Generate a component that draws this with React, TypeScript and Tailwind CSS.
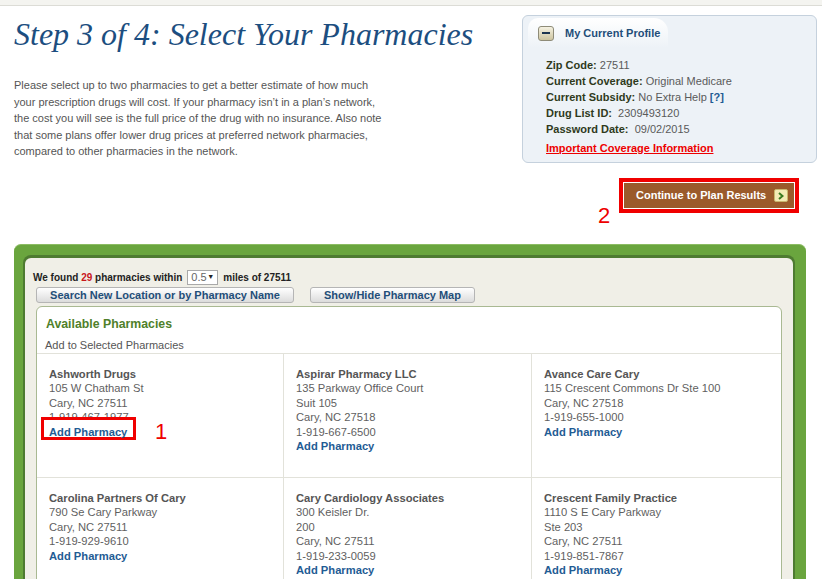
import React from 'react'

type Pharmacy = {
  name: string
  lines: string[]
}

const pharmacies: Pharmacy[] = [
  { name: 'Ashworth Drugs', lines: ['105 W Chatham St', 'Cary, NC 27511', '1-919-467-1977'] },
  { name: 'Aspirar Pharmacy LLC', lines: ['135 Parkway Office Court', 'Suit 105', 'Cary, NC 27518', '1-919-667-6500'] },
  { name: 'Avance Care Cary', lines: ['115 Crescent Commons Dr Ste 100', 'Cary, NC 27518', '1-919-655-1000'] },
  { name: 'Carolina Partners Of Cary', lines: ['790 Se Cary Parkway', 'Cary, NC 27511', '1-919-929-9610'] },
  { name: 'Cary Cardiology Associates', lines: ['300 Keisler Dr.', '200', 'Cary, NC 27511', '1-919-233-0059'] },
  { name: 'Crescent Family Practice', lines: ['1110 S E Cary Parkway', 'Ste 203', 'Cary, NC 27511', '1-919-851-7867'] },
]

function ProfileRow({ label, children }: { label: string; children: React.ReactNode }) {
  return (
    <div className="h-[16px] leading-[16px] whitespace-pre">
      <span className="font-bold text-[#2f3a1c]">{label}</span>
      <span className="text-[#5a5a5a]">{children}</span>
    </div>
  )
}

function PharmacyCell({ p, index }: { p: Pharmacy; index: number }) {
  const lastCol = index % 3 === 2
  return (
    <div
      className={`relative h-[124px] pl-3 pt-[13px] text-[11.2px] leading-[14.4px] ${index < 3 ? 'border-b border-[#e2e2da]' : ''} ${lastCol ? '' : 'border-r border-[#e2e2da]'}`}
    >
      <div className="font-bold text-[#555]">{p.name}</div>
      {p.lines.map((l) => (
        <div key={l} className="text-[#5f5f5f]">{l}</div>
      ))}
      <div className={`font-bold text-[#1f5c94] ${index === 0 ? 'relative z-10' : ''}`}>Add Pharmacy</div>

      {/* annotation 1 */}
      {index === 0 && (
        <>
          <div className="absolute left-[4px] top-[63px] w-[95px] h-[23px] bg-white border-[3px] border-[#f00000]" />
          <div className="absolute left-[118px] top-[67px] text-[22px] leading-[22px] text-[#ee0000]">1</div>
        </>
      )}
    </div>
  )
}

export default function App() {
  return (
    <div className="relative w-[822px] h-[579px] overflow-hidden bg-white font-['Liberation_Sans',Arial,sans-serif]">
      <div className="h-[6px] bg-[#f4f4f0] border-b border-[#dcdcd6]" />

      {/* HEADER */}
      <div className="flex items-start pt-[9px]">
        <div className="pl-[14px] flex-1">
          <h1 className="font-['Liberation_Serif','Times_New_Roman',serif] italic text-[32px] leading-[38px] text-[#1c4e80]">
            Step 3 of 4: Select Your Pharmacies
          </h1>
          <p className="mt-[24px] text-[11px] leading-[16.5px] text-[#555]">
            Please select up to two pharmacies to get a better estimate of how much
            <br />
            your prescription drugs will cost. If your pharmacy isn’t in a plan’s network,
            <br />
            the cost you will see is the full price of the drug with no insurance. Also note
            <br />
            that some plans offer lower drug prices at preferred network pharmacies,
            <br />
            compared to other pharmacies in the network.
          </p>
        </div>

        <div className="w-[295px] h-[148px] mr-[5px] rounded-[6px] border border-[#c5d1dd] bg-[#edf2f7]">
          <div className="ml-[5px] mt-[2px] w-[140px] h-[30px] rounded-tl-[10px] rounded-tr-[14px] bg-gradient-to-b from-white to-[#edf2f7] flex items-center pl-[10px] whitespace-nowrap">
            <div className="w-[16px] h-[15px] rounded-[3px] border border-[#8e8b78] bg-gradient-to-b from-[#f5f2e2] to-[#cdc4a0] flex items-center justify-center">
              <div className="w-[8px] h-[2px] bg-[#1d3550]" />
            </div>
            <span className="ml-[11px] text-[11px] font-bold text-[#1f4e79]">My Current Profile</span>
          </div>
          <div className="pl-[23px] pt-[9px] text-[11px]">
            <ProfileRow label="Zip Code:"> 27511</ProfileRow>
            <ProfileRow label="Current Coverage:"> Original Medicare</ProfileRow>
            <ProfileRow label="Current Subsidy:">
              {' No Extra Help '}
              <span className="font-bold text-[#1f5c94]">[?]</span>
            </ProfileRow>
            <ProfileRow label="Drug List ID:">{'  2309493120'}</ProfileRow>
            <ProfileRow label="Password Date:">{'  09/02/2015'}</ProfileRow>
            <div className="mt-[3px] h-[16px] leading-[16px] font-bold text-[#ee0000] underline">Important Coverage Information</div>
          </div>
        </div>
      </div>

      {/* CONTINUE BUTTON */}
      <div className="flex justify-end pr-[23px] mt-[15px]">
        <div className="relative border-4 border-[#f00000] p-[1px] bg-white">
          <div className="w-[170px] h-[25px] bg-[#9b5a2b] flex items-center pl-[12px] pr-[6px] whitespace-nowrap">
            <span className="text-[11px] font-bold text-white">Continue to Plan Results</span>
            <span className="ml-auto w-[14px] h-[13px] rounded-[2px] border border-[#c9b76e] bg-[#f3ebb6] flex items-center justify-center">
              <svg width="6" height="8" viewBox="0 0 6 8">
                <path d="M1 1 L4.5 4 L1 7" fill="none" stroke="#3b7a22" strokeWidth="2" />
              </svg>
            </span>
          </div>
          <div className="absolute left-[-25px] top-[23px] text-[22px] leading-[22px] text-[#ee0000]">2</div>
        </div>
      </div>

      {/* GREEN PANEL */}
      <div className="ml-[14px] mt-[31px] w-[792px] h-[400px] rounded-t-[7px] bg-[#6aa53e] border-t border-[#8cbc63] pt-[13px] pl-[11px] pr-[13px]">
        <div className="h-full rounded-t-[6px] bg-[#f0efe7] shadow-[0_-1px_0_2px_#4e7b31] pt-[11px] pl-[8px] pr-[11px]">
          <div className="h-[16px] flex items-center text-[10px] font-bold text-[#222] whitespace-nowrap">
            <span>We found <span className="text-[#c8171b]">29</span> pharmacies within</span>
            <span className="mx-[5px] w-[31px] h-[15px] bg-white border border-[#a9a9a9] flex items-center justify-between px-[3px] font-normal text-[11px] text-[#666]">
              0.5<span className="text-[7px] text-[#222]">▼</span>
            </span>
            <span>miles of 27511</span>
          </div>
          <div className="mt-[2px] ml-[3px] flex gap-[16px]">
            <button className="w-[258px] h-[16px] rounded-[3px] border border-[#b5b5b5] bg-gradient-to-b from-white to-[#dcdcdc] text-[11px] leading-[14px] font-bold text-[#1f4e79]">
              Search New Location or by Pharmacy Name
            </button>
            <button className="w-[165px] h-[16px] rounded-[3px] border border-[#b5b5b5] bg-gradient-to-b from-white to-[#dcdcdc] text-[11px] leading-[14px] font-bold text-[#1f4e79]">
              Show/Hide Pharmacy Map
            </button>
          </div>

          <div className="mt-[3px] ml-[3px] w-[746px] h-[300px] rounded-t-[6px] border border-[#a9b992] bg-white">
            <div className="pl-[9px] pt-[9px] text-[12.3px] leading-[17px] font-bold text-[#4f7f2a]">Available Pharmacies</div>
            <div className="pl-[8px] mt-[4px] text-[11px] leading-[16px] text-[#555]">Add to Selected Pharmacies</div>
            <div className="grid grid-cols-[247px_248px_1fr] border-t border-[#e2e2da]">
              {pharmacies.map((p, i) => (
                <PharmacyCell key={p.name} p={p} index={i} />
              ))}
            </div>
          </div>
        </div>
      </div>
    </div>
  )
}
